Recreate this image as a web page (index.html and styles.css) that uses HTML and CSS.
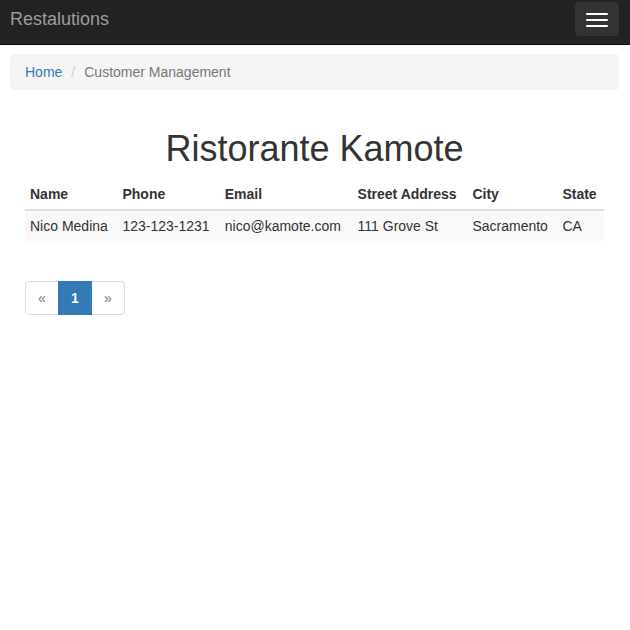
FILE: index.html
```html
<!DOCTYPE html>
<html>
<head>
<meta charset="utf-8">
<link rel="stylesheet" href="styles.css">
</head>
<body>
<nav class="navbar">
  <a class="brand" href="#">Restalutions</a>
  <button class="toggle" type="button"><span class="bar"></span><span class="bar"></span><span class="bar"></span></button>
</nav>
<div class="container">
  <ol class="breadcrumb">
    <li><a href="#">Home</a></li>
    <li class="sep">/</li>
    <li class="active">Customer Management</li>
  </ol>
  <div class="content">
    <h1 class="title">Ristorante Kamote</h1>
    <table class="table">
      <thead>
        <tr><th>Name</th><th>Phone</th><th>Email</th><th>Street Address</th><th>City</th><th>State</th></tr>
      </thead>
      <tbody>
        <tr><td>Nico Medina</td><td>123-123-1231</td><td>nico@kamote.com</td><td>111 Grove St</td><td>Sacramento</td><td>CA</td></tr>
      </tbody>
    </table>
    <ul class="pagination">
      <li class="page first"><a href="#">«</a></li>
      <li class="page active"><a href="#">1</a></li>
      <li class="page last"><a href="#">»</a></li>
    </ul>
  </div>
</div>
</body>
</html>
```
FILE: styles.css
```css
* { box-sizing: border-box; }
html, body { margin: 0; padding: 0; }
body {
  font-family: "Liberation Sans", Arial, sans-serif;
  font-size: 14px;
  line-height: 20px;
  color: #333;
  background: #fff;
}
a { text-decoration: none; }
.navbar {
  height: 45px;
  background: #222;
  border-bottom: 1px solid #080808;
  display: flex;
  align-items: flex-start;
  justify-content: space-between;
  padding: 0 11px 0 10px;
}
.brand {
  color: #9d9d9d;
  font-size: 18px;
  line-height: 20px;
  padding-top: 9px;
}
.toggle {
  margin-top: 2px;
  width: 44px;
  height: 34px;
  background: #333;
  border: 1px solid #333;
  border-radius: 4px;
  padding: 10px 0 0 0;
  display: flex;
  flex-direction: column;
  align-items: center;
  gap: 4px;
}
.bar {
  display: block;
  width: 22px;
  height: 2px;
  background: #fff;
  border-radius: 1px;
}
.container { padding: 0 11px 0 10px; }
.breadcrumb {
  list-style: none;
  margin: 9px 0 0 0;
  padding: 8px 15px 7px;
  height: 36px;
  background: #f5f5f5;
  border-radius: 4px;
  display: flex;
  gap: 9px;
}
.breadcrumb li { line-height: 20px; }
.breadcrumb a { color: #337ab7; }
.breadcrumb .sep { color: #ccc; }
.breadcrumb .active { color: #777; }
.content { padding: 0 15px; }
.title {
  margin: 39px 0 0;
  text-align: center;
  font-size: 36px;
  font-weight: 500;
  line-height: 40px;
  color: #333;
}
.table {
  margin-top: 10px;
  width: 100%;
  border-collapse: collapse;
  border-spacing: 0;
}
.table th, .table td {
  padding: 5px;
  text-align: left;
  line-height: 20px;
  vertical-align: bottom;
  white-space: nowrap;
}
.table th { font-weight: bold; border-bottom: 2px solid #ddd; }
.table tbody tr { background: #f9f9f9; }
.pagination {
  list-style: none;
  margin: 40px 0 0;
  padding: 0;
  display: flex;
}
.page a {
  display: block;
  min-width: 34px;
  text-align: center;
  padding: 6px 0;
  line-height: 20px;
  height: 34px;
  border: 1px solid #ddd;
  margin-left: -1px;
  color: #777;
  background: #fff;
}
.page.first a { margin-left: 0; border-radius: 4px 0 0 4px; }
.page.last a { border-radius: 0 4px 4px 0; }
.page.active a {
  background: #337ab7;
  border-color: #337ab7;
  color: #fff;
  font-weight: bold;
  position: relative;
}
```
